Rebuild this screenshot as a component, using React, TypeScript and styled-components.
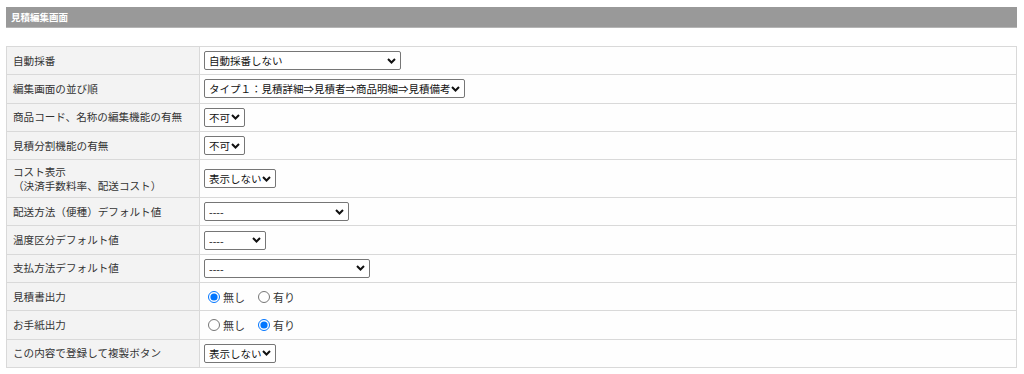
import React from 'react';
import styled, { createGlobalStyle } from 'styled-components';

const GlobalStyle = createGlobalStyle`
  body {
    margin: 0;
    background: #fff;
    font-family: "Noto Sans CJK JP", "Noto Sans", sans-serif;
    color: #333;
  }
`;

const chevron =
  "url(\"data:image/svg+xml;utf8,<svg xmlns='http://www.w3.org/2000/svg' width='9' height='6' viewBox='0 0 9 6'><path d='M1 1l3.5 3.5L8 1' fill='none' stroke='%23111' stroke-width='2'/></svg>\")";

const Page = styled.div`
  padding: 7px 7px 0 6px;
`;

const TitleBar = styled.h2`
  margin: 0;
  height: 21px;
  display: flex;
  align-items: center;
  padding: 0 5px;
  background: #999;
  border-bottom: 1px solid #b5b5b5;
  box-sizing: border-box;
  color: #fff;
  font-size: 9.5px;
  font-weight: bold;
`;

const FormTable = styled.table`
  margin-top: 18px;
  width: 100%;
  border-collapse: collapse;
  border: 1px solid #d6d6d6;
  font-size: 10.6px;
`;

const Row = styled.tr<{ $tall?: boolean }>`
  height: ${(p) => (p.$tall ? 38 : 28.3)}px;
`;

const Label = styled.th`
  width: 180px;
  padding: 0 6px;
  background: #f3f3f3;
  border: 1px solid #d9d9d9;
  text-align: left;
  font-weight: normal;
  line-height: 14px;
  color: #333;
  vertical-align: middle;
`;

const Cell = styled.td`
  padding: 0 4px;
  border: 1px solid #d9d9d9;
  background: #fefefe;
  vertical-align: middle;
`;

const Select = styled.select<{ $w: number }>`
  appearance: none;
  width: ${(p) => p.$w}px;
  height: 19px;
  font-size: 10.5px;
  font-family: "Noto Sans CJK JP", "Noto Sans", sans-serif;
  color: #111;
  border: 1px solid #767676;
  border-radius: 2px;
  background: #fff ${chevron} no-repeat right 4px center;
  padding: 0 13px 0 4px;
  display: block;
`;

const RadioGroup = styled.div`
  display: flex;
  align-items: center;
  gap: 10px;
  padding-left: 1px;
`;

const RadioLabel = styled.label`
  display: flex;
  align-items: center;
  gap: 1px;
  font-size: 11px;
  color: #333;

  input {
    margin: 0 2px 0 3px;
    width: 12px;
    height: 12px;
  }
`;

type Choice = { label: React.ReactNode; select?: { w: number; value: string }; radio?: number };

const rows: Choice[] = [
  { label: '自動採番', select: { w: 197, value: '自動採番しない' } },
  { label: '編集画面の並び順', select: { w: 261, value: 'タイプ１：見積詳細⇒見積者⇒商品明細⇒見積備考' } },
  { label: '商品コード、名称の編集機能の有無', select: { w: 41, value: '不可' } },
  { label: '見積分割機能の有無', select: { w: 41, value: '不可' } },
  {
    label: (
      <>
        コスト表示
        <br />
        （決済手数料率、配送コスト）
      </>
    ),
    select: { w: 72, value: '表示しない' }
  },
  { label: '配送方法（便種）デフォルト値', select: { w: 145, value: '----' } },
  { label: '温度区分デフォルト値', select: { w: 62, value: '----' } },
  { label: '支払方法デフォルト値', select: { w: 166, value: '----' } },
  { label: '見積書出力', radio: 0 },
  { label: 'お手紙出力', radio: 1 },
  { label: 'この内容で登録して複製ボタン', select: { w: 72, value: '表示しない' } }
];

export default function App() {
  return (
    <Page>
      <GlobalStyle />
      <TitleBar>見積編集画面</TitleBar>
      <FormTable>
        <tbody>
          {rows.map((r, i) => (
            <Row key={i} $tall={i === 4}>
              <Label>{r.label}</Label>
              <Cell>
                {r.select && (
                  <Select $w={r.select.w} defaultValue={r.select.value}>
                    <option>{r.select.value}</option>
                  </Select>
                )}
                {r.radio !== undefined && (
                  <RadioGroup>
                    <RadioLabel>
                      <input type='radio' name={`r${i}`} defaultChecked={r.radio === 0} />
                      無し
                    </RadioLabel>
                    <RadioLabel>
                      <input type='radio' name={`r${i}`} defaultChecked={r.radio === 1} />
                      有り
                    </RadioLabel>
                  </RadioGroup>
                )}
              </Cell>
            </Row>
          ))}
        </tbody>
      </FormTable>
    </Page>
  );
}
